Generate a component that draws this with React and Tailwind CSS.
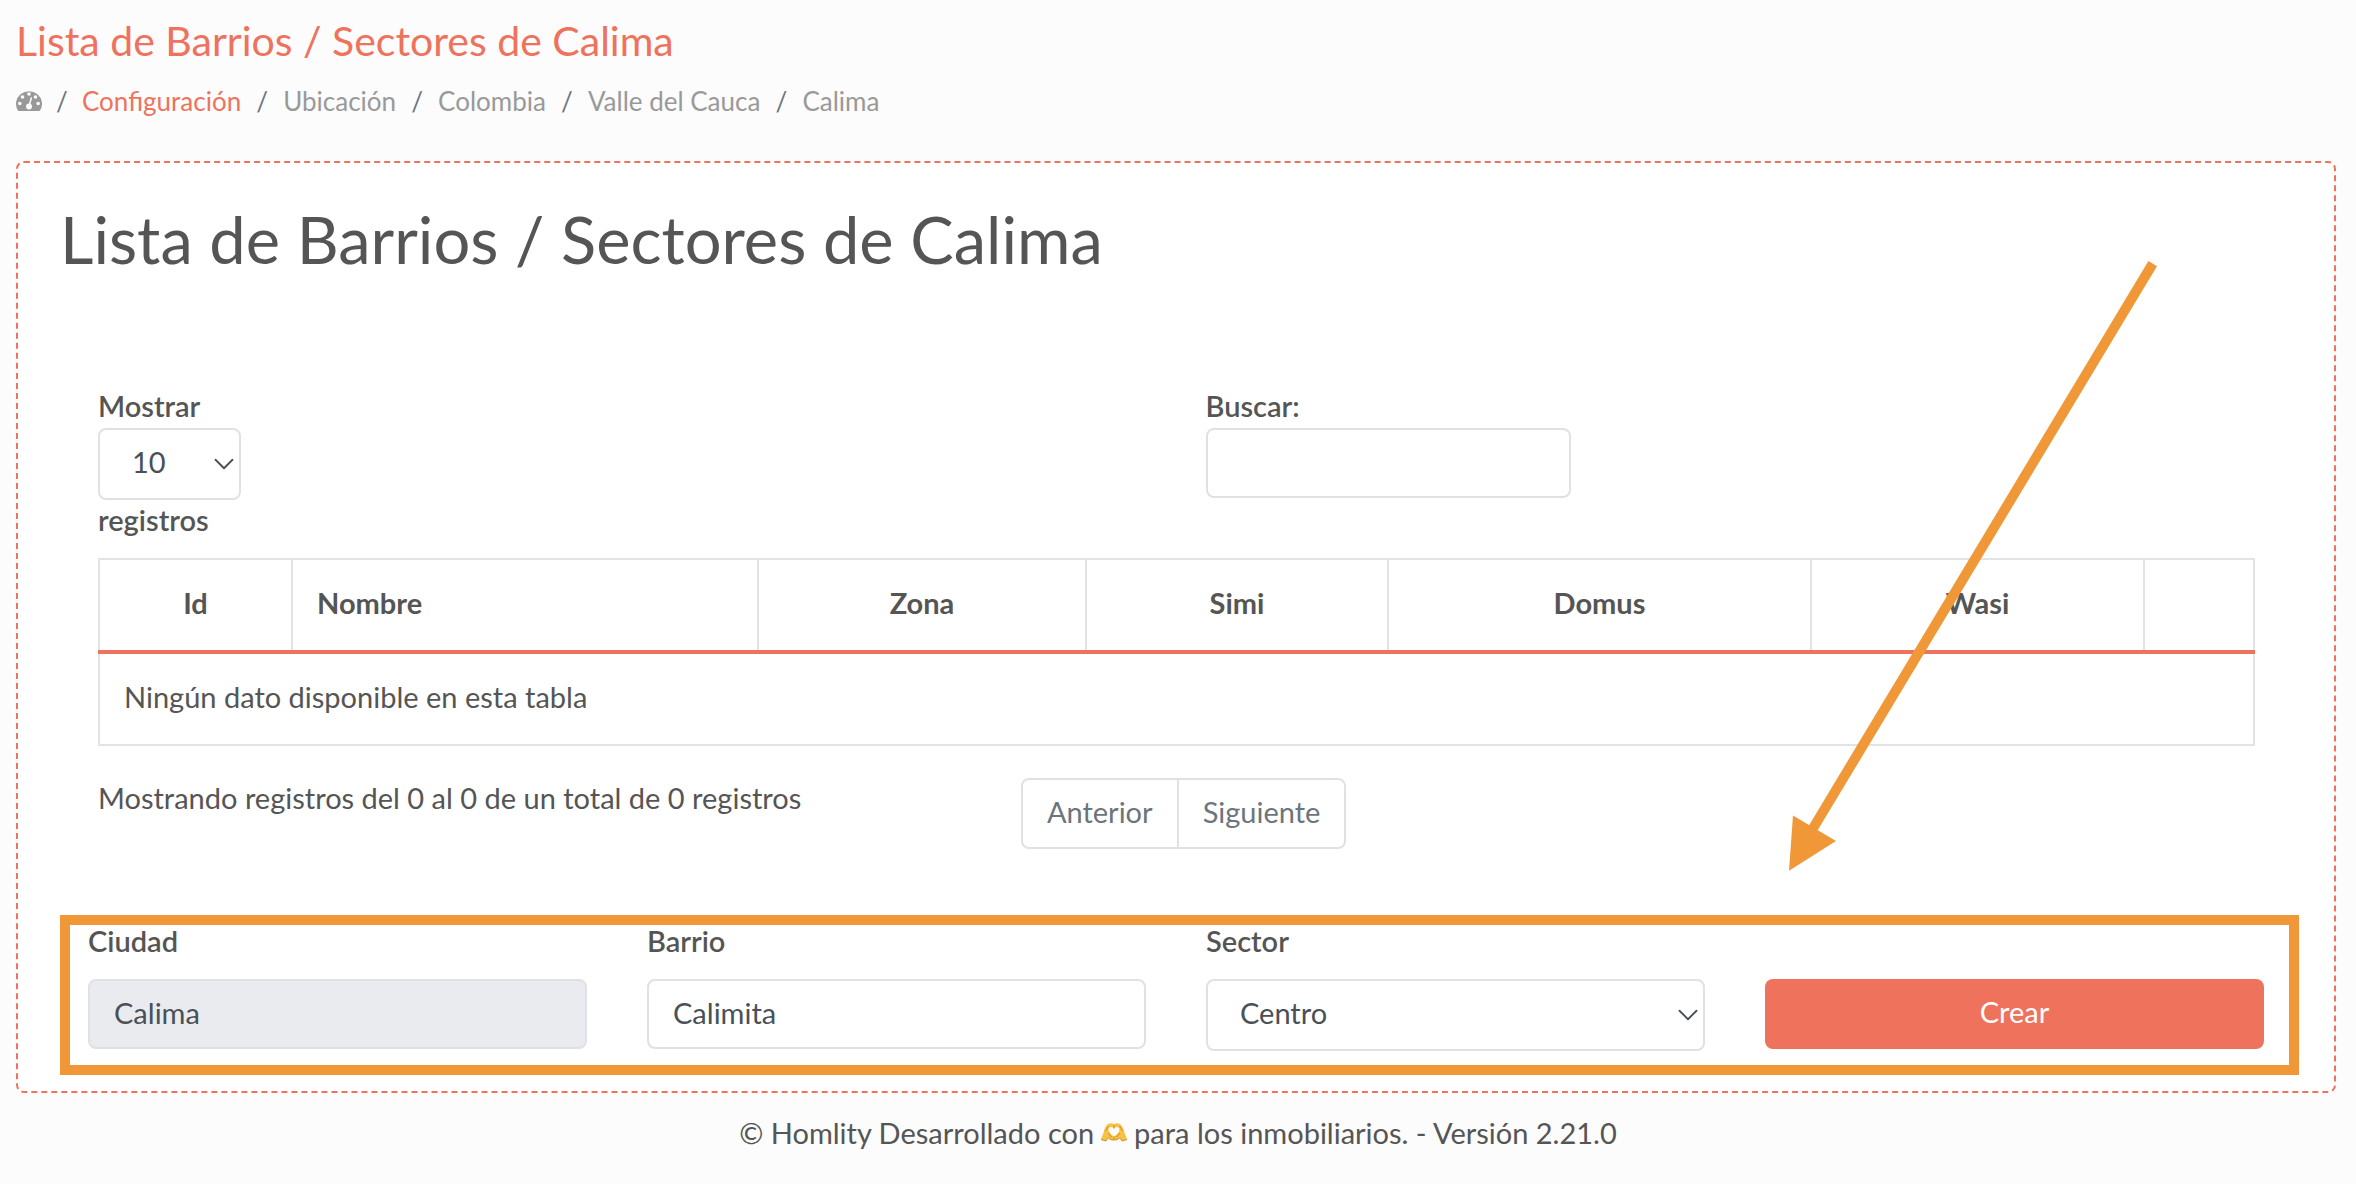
import React from 'react';
import { ChevronDown } from 'lucide-react';
import clsx from 'clsx';

const breadcrumbs = ['Ubicación', 'Colombia', 'Valle del Cauca', 'Calima'];

const columns = [
  { label: 'Id', width: 'w-[193px]' },
  { label: 'Nombre', width: 'w-[466px]', left: true },
  { label: 'Zona', width: 'w-[328px]' },
  { label: 'Simi', width: 'w-[302px]' },
  { label: 'Domus', width: 'w-[423px]' },
  { label: 'Wasi', width: 'w-[333px]' },
  { label: '', width: 'w-[110px]' },
];

const control =
  'block w-full rounded-lg border-2 border-[#e1e1e3] pb-1 text-[#495057]';

function GaugeIcon() {
  return (
    <svg viewBox="0 0 26 22" className="h-[22px] w-[26px]" aria-hidden="true">
      <path d="M2 20.500A13 12.500 0 1 1 24 20.500Q23.700 21 23 21H3Q2.300 21 2 20.500Z" fill="#999" />
      <g fill="#fcfcfc">
        <circle cx="3.800" cy="13.500" r="1.800" />
        <circle cx="6.500" cy="7" r="1.800" />
        <circle cx="13" cy="4" r="1.800" />
        <circle cx="19.500" cy="7" r="1.800" />
        <circle cx="22.200" cy="13.500" r="1.800" />
        <circle cx="13" cy="16.500" r="3" />
      </g>
      <path d="M13 16.500 15.300 8" stroke="#fcfcfc" strokeWidth="1.500" strokeLinecap="round" />
    </svg>
  );
}

function HeartHands() {
  return (
    <svg viewBox="0 0 28 20" className="mx-[6px] mb-[2px] inline-block h-5 w-7 align-baseline" role="img" aria-label="manos en corazón">
      <path
        fillRule="evenodd"
        d="M.8 17.500 3.500 11Q4.500 5 7.500 2.500Q11 .2 14 2.500Q17 .2 20.500 2.500Q23.500 5 24.500 11L27.200 17.500L22 19Q21 16.500 19.500 16Q17 18.500 14 18Q11 18.500 8.500 16Q7 16.500 6 19ZM14 14.500Q19.500 11 19.500 7.800Q19.300 5 16.800 5Q14.800 5 14 6.800Q13.200 5 11.200 5Q8.700 5 8.500 7.800Q8.500 11 14 14.500Z"
        fill="#f7c244"
      />
      <path
        d="M1 17.500 6 19Q7 16.500 8.500 16Q11 18.500 14 18Q17 18.500 19.500 16Q21 16.500 22 19L27 17.500M14 14.500V18M5.500 9 8.500 4M22.500 9 19.500 4M14 2.500V6.500M8.500 11Q9.500 14 12 15M19.500 11Q18.500 14 16 15"
        fill="none"
        stroke="#cf8f2e"
        strokeWidth="1"
      />
    </svg>
  );
}

function Select({ id, children, ...props }) {
  return (
    <div className="relative">
      <select id={id} className={clsx(control, 'h-[72px] appearance-none bg-white pl-8')} {...props}>
        {children}
      </select>
      <ChevronDown
        className="pointer-events-none absolute top-[19px] right-0 h-[34px] w-[34px] text-[#495057]"
        strokeWidth={1.3}
      />
    </div>
  );
}

function Field({ id, label, children }) {
  return (
    <div>
      <label htmlFor={id} className="mb-[22px] block leading-8 font-semibold">{label}</label>
      {children}
    </div>
  );
}

// Arrow that points at the create form
function Arrow() {
  return (
    <svg viewBox="0 0 370 612" className="pointer-events-none absolute right-[176px] top-[98px] h-[612px] w-[370px]" aria-hidden="true">
      <path d="M364.700 2.700 24 569" stroke="#f09837" strokeWidth="10" />
      <path d="M1 609.700 5 554.500 48 580Z" fill="#f09837" />
    </svg>
  );
}

export default function App() {
  return (
    <div className="min-h-screen bg-[#fcfcfc] font-['Lato',sans-serif] text-[29px] leading-[44px] text-[#555]">
      <header className="px-4 pt-[17px]">
        <h2 className="text-[41px] leading-[48px] text-[#ef725c]">Lista de Barrios / Sectores de Calima</h2>
        <nav className="mt-4 mb-10 flex h-10 items-center text-[26px] leading-10 text-[#999]" aria-label="breadcrumb">
          <a href="#inicio" aria-label="Inicio"><GaugeIcon /></a>
          <span className="w-10 text-center text-[#6c757d]">/</span>
          <a href="#configuracion" className="text-[#ef725c]">Configuración</a>
          {breadcrumbs.map(name => (
            <React.Fragment key={name}>
              <span className="w-[42px] text-center text-[#6c757d]">/</span>
              <span>{name}</span>
            </React.Fragment>
          ))}
        </nav>
      </header>

      <main className="relative mr-5 ml-4 rounded-lg border-2 border-dashed border-[#ef725c] bg-white pt-[38px] pr-[35px] pb-4 pl-[42px]">
        <h1 className="text-[65px] leading-[76px]">Lista de Barrios / Sectores de Calima</h1>

        <section className="mt-[107px] mr-[46px] ml-[38px]">
          <div className="grid grid-cols-2 gap-[60px]">
            <div className="font-semibold">
              <label htmlFor="length" className="block">Mostrar</label>
              <div className="w-[143px] font-normal">
                <Select id="length" defaultValue="10">
                  <option>10</option>
                  <option>25</option>
                  <option>50</option>
                </Select>
              </div>
              <span className="block leading-10">registros</span>
            </div>
            <div>
              <label htmlFor="search" className="block font-semibold">Buscar:</label>
              <div className="w-[365px]">
                <input id="search" type="search" className={clsx(control, 'h-[70px] bg-white px-6')} />
              </div>
            </div>
          </div>

          <table className="mt-[18px] w-full table-fixed border-collapse border-2 border-[#e1e3e6]">
            <thead>
              <tr className="h-[93px] border-b-4 border-[#ef725c]">
                {columns.map(col => (
                  <th
                    key={col.label}
                    className={clsx('border-x-2 border-x-[#e1e3e6] px-6 pb-1 font-bold', col.width, col.left ? 'text-left' : 'text-center')}
                  >
                    {col.label}
                  </th>
                ))}
              </tr>
            </thead>
            <tbody>
              <tr className="h-[93px]">
                <td colSpan={7} className="px-6 pb-1">Ningún dato disponible en esta tabla</td>
              </tr>
            </tbody>
          </table>

          <div className="mt-[30px] grid grid-cols-12 gap-x-[60px]">
            <p className="col-span-5">Mostrando registros del 0 al 0 de un total de 0 registros</p>
            <div className="col-span-7 mt-[2px] flex text-[#6c757d]">
              <button type="button" className="h-[71px] rounded-l-lg border-2 border-[#dee2e6] bg-white px-6 pb-1">Anterior</button>
              <button type="button" className="h-[71px] rounded-r-lg border-2 border-l-0 border-[#dee2e6] bg-white px-6 pb-1">Siguiente</button>
            </div>
          </div>
        </section>

        <form className="mt-[66px] grid grid-cols-4 items-start gap-x-[60px] border-10 border-[#f09837] pr-[25px] pb-[14px] pl-[18px]">
          <Field id="ciudad" label="Ciudad">
            <input id="ciudad" disabled defaultValue="Calima" className={clsx(control, 'h-[70px] bg-[#eaebef] px-6')} />
          </Field>
          <Field id="barrio" label="Barrio">
            <input id="barrio" defaultValue="Calimita" className={clsx(control, 'h-[70px] bg-white px-6')} />
          </Field>
          <Field id="sector" label="Sector">
            <Select id="sector" defaultValue="Centro">
              <option>Centro</option>
              <option>Norte</option>
              <option>Sur</option>
            </Select>
          </Field>
          <button type="button" className="mt-[54px] h-[70px] rounded-lg bg-[#ef725c] pb-1 text-white">Crear</button>
        </form>

        <Arrow />
      </main>

      <footer className="py-[18px] text-center">
        © Homlity Desarrollado con<HeartHands />para los inmobiliarios. - Versión 2.21.0
      </footer>
    </div>
  );
}
